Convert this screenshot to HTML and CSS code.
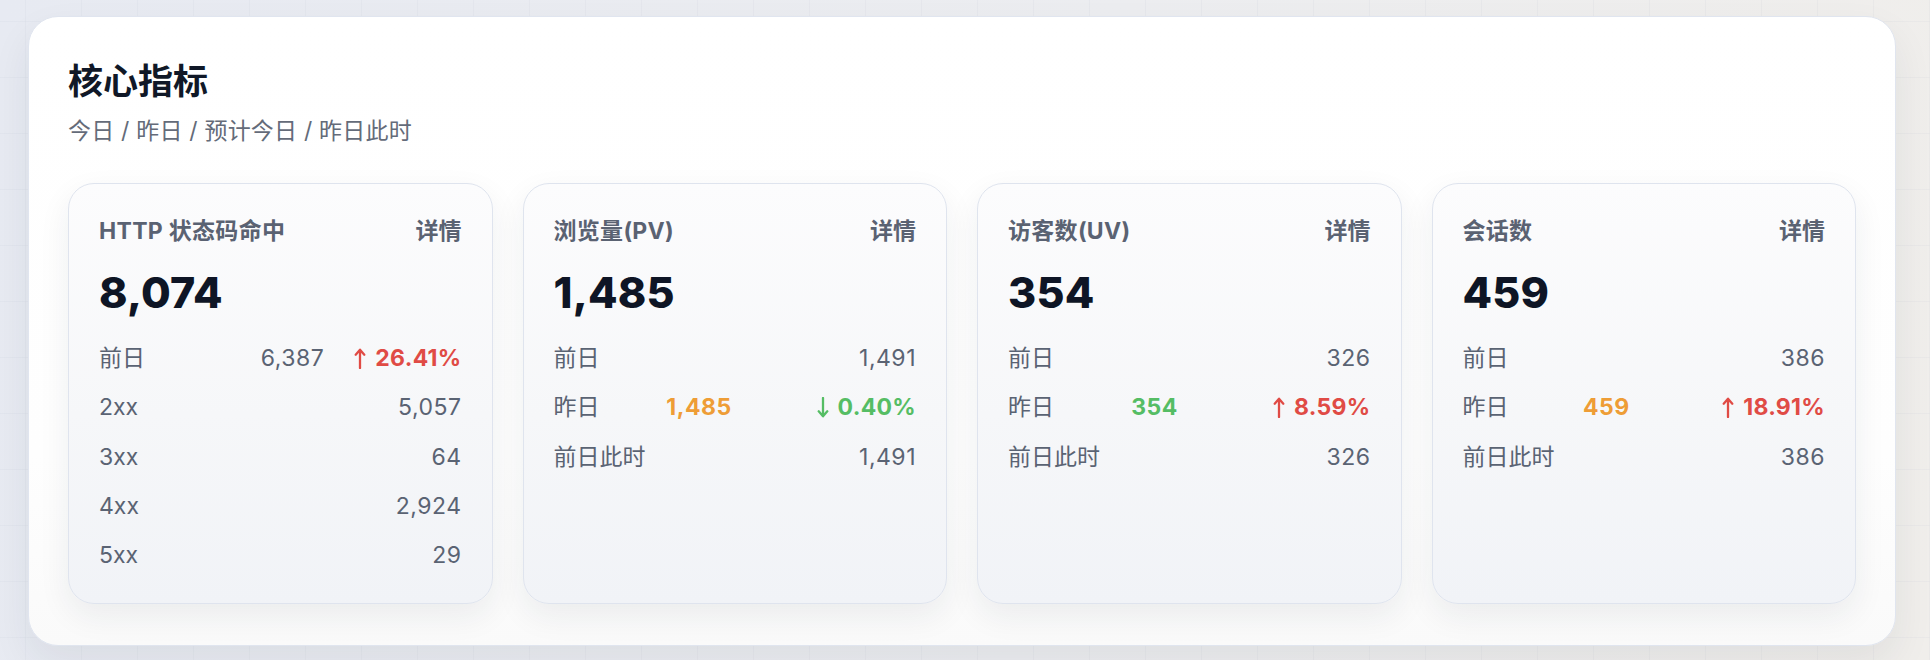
FILE: index.html
```html
<!DOCTYPE html>
<html lang="zh-CN">
<head>
<meta charset="utf-8">
<title>核心指标</title>
<link rel="stylesheet" href="styles.css">
</head>
<body>
<main class="panel">
  <header class="panel-head">
    <h1 class="panel-title">核心指标</h1>
    <p class="panel-sub">今日 / 昨日 / 预计今日 / 昨日此时</p>
  </header>
  <section class="cards">
    <article class="card">
      <div class="card-head"><span class="card-name">HTTP 状态码命中</span><a class="card-link">详情</a></div>
      <div class="card-value">8,074</div>
      <ul class="rows">
        <li class="row"><span class="label">前日</span><span class="group"><span class="val">6,387</span><span class="chg up"><svg class="arrow" viewBox="0 0 12 22" aria-hidden="true"><path d="M6 21V2M1.5 7L6 1.8 10.5 7"/></svg>26.41%</span></span></li>
        <li class="row"><span class="label">2xx</span><span class="val">5,057</span></li>
        <li class="row"><span class="label">3xx</span><span class="val">64</span></li>
        <li class="row"><span class="label">4xx</span><span class="val">2,924</span></li>
        <li class="row"><span class="label">5xx</span><span class="val">29</span></li>
      </ul>
    </article>
    <article class="card">
      <div class="card-head"><span class="card-name">浏览量(PV)</span><a class="card-link">详情</a></div>
      <div class="card-value">1,485</div>
      <ul class="rows">
        <li class="row"><span class="label">前日</span><span class="val">1,491</span></li>
        <li class="row"><span class="label">昨日</span><span class="val strong orange">1,485</span><span class="chg down"><svg class="arrow" viewBox="0 0 12 22" aria-hidden="true"><path d="M6 1V20M1.5 15L6 20.2 10.5 15"/></svg>0.40%</span></li>
        <li class="row"><span class="label">前日此时</span><span class="val">1,491</span></li>
      </ul>
    </article>
    <article class="card">
      <div class="card-head"><span class="card-name">访客数(UV)</span><a class="card-link">详情</a></div>
      <div class="card-value">354</div>
      <ul class="rows">
        <li class="row"><span class="label">前日</span><span class="val">326</span></li>
        <li class="row"><span class="label">昨日</span><span class="val strong green">354</span><span class="chg up"><svg class="arrow" viewBox="0 0 12 22" aria-hidden="true"><path d="M6 21V2M1.5 7L6 1.8 10.5 7"/></svg>8.59%</span></li>
        <li class="row"><span class="label">前日此时</span><span class="val">326</span></li>
      </ul>
    </article>
    <article class="card">
      <div class="card-head"><span class="card-name">会话数</span><a class="card-link">详情</a></div>
      <div class="card-value">459</div>
      <ul class="rows">
        <li class="row"><span class="label">前日</span><span class="val">386</span></li>
        <li class="row"><span class="label">昨日</span><span class="val strong orange">459</span><span class="chg up"><svg class="arrow" viewBox="0 0 12 22" aria-hidden="true"><path d="M6 21V2M1.5 7L6 1.8 10.5 7"/></svg>18.91%</span></li>
        <li class="row"><span class="label">前日此时</span><span class="val">386</span></li>
      </ul>
    </article>
  </section>
</main>
</body>
</html>
```

FILE: styles.css
```css
html, body {
  margin: 0;
  height: 660px;
}

body {
  box-sizing: border-box;
  padding: 16px 34px 0 28px;
  font-family: Inter, "Noto Sans CJK SC", sans-serif;
  color: #5a6373;
  background-color: #eceef2;
  background-image:
    linear-gradient(90deg, rgba(190, 196, 208, 0.13) 1px, transparent 1px),
    linear-gradient(0deg, rgba(190, 196, 208, 0.13) 1px, transparent 1px),
    linear-gradient(100deg, #e7eaf2 0%, #ecedf0 55%, #f0eeeb 100%);
  background-size: 56px 56px, 56px 56px, 100% 100%;
  background-position: 25px 22px, 25px 22px, 0 0;
  overflow: hidden;
}

.panel {
  box-sizing: border-box;
  width: 1868px;
  height: 630px;
  background: linear-gradient(180deg, #ffffff 0%, #fefefe 70%, #fafafa 100%);
  border: 1px solid #e0e5ef;
  border-radius: 30px;
  padding: 39px 39px 41px;
  box-shadow: 0 18px 40px rgba(30, 41, 59, 0.07);
}

.panel-head {
  display: flex;
  flex-direction: column;
  gap: 8px;
}

.panel-title {
  margin: 0;
  font-size: 35px;
  line-height: 50px;
  font-weight: 700;
  color: #101827;
}

.panel-sub {
  margin: 0;
  font-size: 23px;
  line-height: 34px;
  color: #646b79;
  letter-spacing: 0.2px;
}

.cards {
  margin-top: 35px;
  display: grid;
  grid-template-columns: repeat(4, 1fr);
  gap: 30px;
}

.card {
  box-sizing: border-box;
  height: 421px;
  border: 1px solid #dfe4ee;
  border-radius: 26px;
  padding: 30px;
  background: linear-gradient(180deg, #fcfcfd 0%, #f6f7f9 55%, #f1f3f7 100%);
  box-shadow: 0 12px 32px rgba(30, 41, 59, 0.07);
}

.card-head {
  display: flex;
  justify-content: space-between;
  align-items: center;
  font-size: 23px;
  line-height: 34px;
  font-weight: 700;
  color: #5a6272;
}

.card-name {
  letter-spacing: 0.3px;
}

.card-link {
  color: #5a6272;
  cursor: pointer;
}

.card-value {
  margin-top: 17px;
  font-size: 43px;
  line-height: 54px;
  font-weight: 800;
  color: #0e1525;
  letter-spacing: 0.2px;
}

.rows {
  list-style: none;
  margin: 22px 0 0;
  padding: 0;
  display: flex;
  flex-direction: column;
  gap: 15.3px;
}

.row {
  display: flex;
  justify-content: space-between;
  align-items: center;
  font-size: 23px;
  line-height: 34px;
  color: #5a6373;
}

.val {
  letter-spacing: 0.5px;
}

.group {
  display: flex;
  align-items: center;
  gap: 30px;
}

.strong {
  font-weight: 700;
}

.orange {
  color: #ee9d36;
}

.green {
  color: #55bd64;
}

.chg {
  display: inline-flex;
  align-items: center;
  gap: 9px;
  font-weight: 700;
  padding-left: 18px;
  letter-spacing: 0.3px;
}

.group .chg {
  padding-left: 0;
}

.arrow {
  width: 12px;
  height: 21px;
  fill: none;
  stroke: currentColor;
  stroke-width: 2.4;
  stroke-linecap: round;
  stroke-linejoin: round;
}

.chg.up {
  color: #e04b45;
}

.chg.down {
  color: #55bd64;
}
```
